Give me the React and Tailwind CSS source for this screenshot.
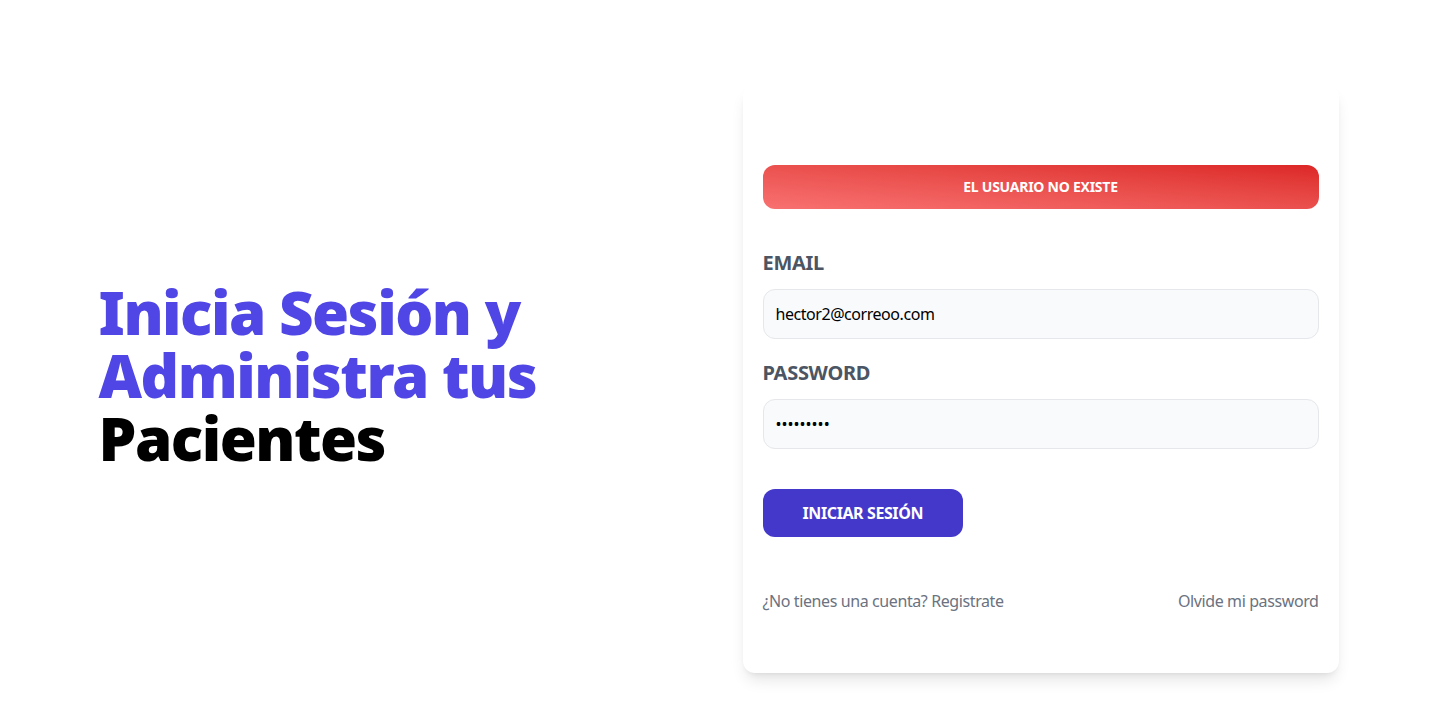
import { useState } from "react";

const font = { fontFamily: '"Noto Sans", "Open Sans", sans-serif' };

function Alerta({ msg }) {
  return (
    <div className="bg-gradient-to-tr from-[#f87171] to-[#dc2626] text-center p-3 rounded-xl uppercase text-white font-bold text-sm leading-5 tracking-[-0.25px] my-10">
      {msg}
    </div>
  );
}

export default function App() {
  const [email, setEmail] = useState("hector2@correoo.com");
  const [password, setPassword] = useState("123456789");

  const handleSubmit = (e) => {
    e.preventDefault();
  };

  return (
    <div className="min-h-screen bg-white" style={font}>
      <main className="container mx-auto pt-[85px] px-5 pb-5 grid grid-cols-2 gap-12 items-center">
        <div className="mb-[8px]">
          <h1 className="text-[#4f46e5] font-black text-[60px] leading-[63px] tracking-[-1.5px]">
            Inicia Sesión y Administra tus{" "}
            <span className="text-black">Pacientes</span>
          </h1>
        </div>

        <div className="shadow-lg px-5 py-10 rounded-xl bg-white">
          <Alerta msg="El usuario no existe" />

          <form onSubmit={handleSubmit}>
            <div className="my-5">
              <label className="uppercase text-[#4b5563] block text-xl leading-7 font-bold tracking-[-0.3px]">
                Email
              </label>
              <input
                type="email"
                placeholder="Email de Registro"
                className="border border-[#e5e7eb] w-full p-3 mt-3 bg-[#f9fafb] rounded-xl text-base leading-6 text-black outline-none tracking-[-0.45px]"
                value={email}
                onChange={(e) => setEmail(e.target.value)}
              />
            </div>

            <div className="my-5">
              <label className="uppercase text-[#4b5563] block text-xl leading-7 font-bold tracking-[-0.3px]">
                Password
              </label>
              <input
                type="password"
                placeholder="Tu Password"
                className="border border-[#e5e7eb] w-full p-3 mt-3 bg-[#f9fafb] rounded-xl text-base leading-6 text-black outline-none"
                value={password}
                onChange={(e) => setPassword(e.target.value)}
              />
            </div>

            <button
              type="submit"
              className="block bg-[#4338ca] py-3 px-10 rounded-xl text-white uppercase font-bold text-base leading-6 mt-10 tracking-[-0.4px] hover:cursor-pointer hover:bg-[#3730a3]"
            >
              Iniciar Sesión
            </button>
          </form>

          <nav className="mt-[52px] mb-5 flex justify-between text-[#6b7280] text-base leading-6 tracking-[-0.4px]">
            <a href="#" className="block">
              ¿No tienes una cuenta? Registrate
            </a>
            <a href="#" className="block">
              Olvide mi password
            </a>
          </nav>
        </div>
      </main>
    </div>
  );
}
